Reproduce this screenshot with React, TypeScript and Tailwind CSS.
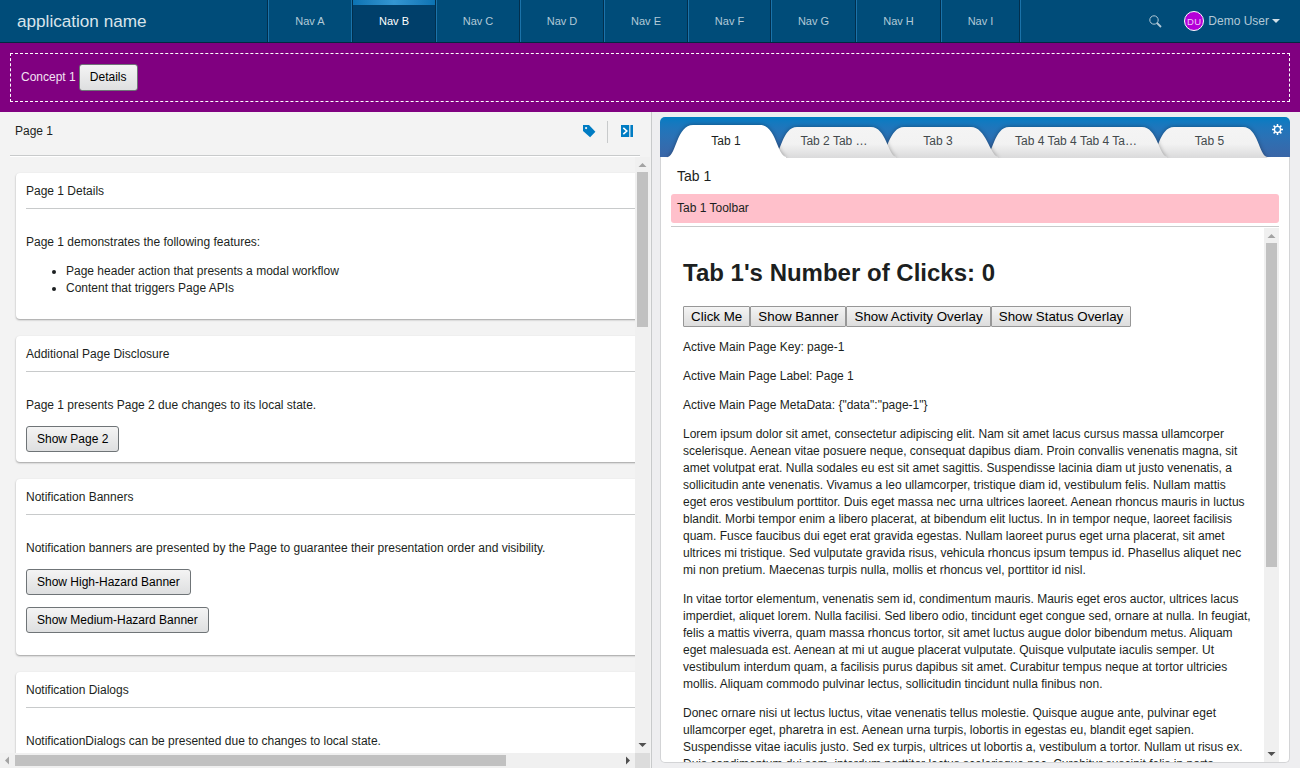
import type { ReactNode } from "react";

const navItems = [
  { label: "Nav A", width: "w-[84px]" },
  { label: "Nav B", width: "w-[84px]" },
  { label: "Nav C", width: "w-[84px]" },
  { label: "Nav D", width: "w-[84px]" },
  { label: "Nav E", width: "w-[84px]" },
  { label: "Nav F", width: "w-[83px]" },
  { label: "Nav G", width: "w-[85px]" },
  { label: "Nav H", width: "w-[85px]" },
  { label: "Nav I", width: "w-[79px]" },
];

const paragraphs = [
  "Active Main Page Key: page-1",
  "Active Main Page Label: Page 1",
  'Active Main Page MetaData: {"data":"page-1"}',
  "Lorem ipsum dolor sit amet, consectetur adipiscing elit. Nam sit amet lacus cursus massa ullamcorper scelerisque. Aenean vitae posuere neque, consequat dapibus diam. Proin convallis venenatis magna, sit amet volutpat erat. Nulla sodales eu est sit amet sagittis. Suspendisse lacinia diam ut justo venenatis, a sollicitudin ante venenatis. Vivamus a leo ullamcorper, tristique diam id, vestibulum felis. Nullam mattis eget eros vestibulum porttitor. Duis eget massa nec urna ultrices laoreet. Aenean rhoncus mauris in luctus blandit. Morbi tempor enim a libero placerat, at bibendum elit luctus. In in tempor neque, laoreet facilisis quam. Fusce faucibus dui eget erat gravida egestas. Nullam laoreet purus eget urna placerat, sit amet ultrices mi tristique. Sed vulputate gravida risus, vehicula rhoncus ipsum tempus id. Phasellus aliquet nec mi non pretium. Maecenas turpis nulla, mollis et rhoncus vel, porttitor id nisl.",
  "In vitae tortor elementum, venenatis sem id, condimentum mauris. Mauris eget eros auctor, ultrices lacus imperdiet, aliquet lorem. Nulla facilisi. Sed libero odio, tincidunt eget congue sed, ornare at nulla. In feugiat, felis a mattis viverra, quam massa rhoncus tortor, sit amet luctus augue dolor bibendum metus. Aliquam eget malesuada est. Aenean at mi ut augue placerat vulputate. Quisque vulputate iaculis semper. Ut vestibulum interdum quam, a facilisis purus dapibus sit amet. Curabitur tempus neque at tortor ultricies mollis. Aliquam commodo pulvinar lectus, sollicitudin tincidunt nulla finibus non.",
  "Donec ornare nisi ut lectus luctus, vitae venenatis tellus molestie. Quisque augue ante, pulvinar eget ullamcorper eget, pharetra in est. Aenean urna turpis, lobortis in egestas eu, blandit eget sapien. Suspendisse vitae iaculis justo. Sed ex turpis, ultrices ut lobortis a, vestibulum a tortor. Nullam ut risus ex. Duis condimentum dui sem, interdum porttitor lectus scelerisque nec. Curabitur suscipit felis in porta.",
];

function Button({ children }: { children: ReactNode }) {
  return (
    <button className="block h-[26px] rounded-[3px] border border-[#6f7477] bg-gradient-to-b from-[#f4f4f4] to-[#dedfe0] px-[10px] text-[12px] leading-[24px] text-black">
      {children}
    </button>
  );
}

function Card({ title, children, className }: { title: string; children: ReactNode; className: string }) {
  return (
    <section className={`w-[760px] shrink-0 rounded-[4px] bg-white px-[10px] shadow-[0_1px_2px_rgba(0,0,0,0.35)] ${className}`}>
      <h2 className="h-[36px] border-b border-[#c8cacb] pt-[10px] leading-[17px]">{title}</h2>
      <div className="pt-[25px]">{children}</div>
    </section>
  );
}

function Arrow({ dir, dim }: { dir: "up" | "down" | "left" | "right"; dim?: boolean }) {
  const points = { up: "3.5,10 7.5,6 11.5,10", down: "3.5,5 7.5,9 11.5,5", left: "9,3.5 5,7.5 9,11.5", right: "6,3.5 10,7.5 6,11.5" }[dir];
  return (
    <svg width="15" height="15" viewBox="0 0 15 15" className="block shrink-0">
      <polygon points={points} fill={dim ? "#a3a3a3" : "#505050"} />
    </svg>
  );
}

function TabShapes() {
  const tab = (l: number, a: number, b: number, r: number) =>
    `M${l} 41 L${l} 40 C${l + 8} 38 ${a - 15} 10 ${a} 10 H${b} C${b + 15} 10 ${r - 8} 38 ${r} 40 L${r} 41 Z`;
  return (
    <svg width="630" height="41" viewBox="0 0 630 41" className="absolute left-0 top-0">
      <defs>
        <linearGradient id="tab" x1="0" y1="0" x2="0" y2="1">
          <stop offset="0" stopColor="#f4f4f4" />
          <stop offset=".55" stopColor="#f2f2f2" />
          <stop offset="1" stopColor="#dadadb" />
        </linearGradient>
        <filter id="shade" x="-10%" y="-25%" width="120%" height="150%" colorInterpolationFilters="sRGB">
          <feDropShadow dx="0" dy="0" stdDeviation="2" floodColor="#000" floodOpacity=".35" />
        </filter>
      </defs>
      <path filter="url(#shade)" fill="url(#tab)" d={tab(490, 514, 583, 607)} />
      <path filter="url(#shade)" fill="url(#tab)" d={tab(325, 349, 482, 507)} />
      <path filter="url(#shade)" fill="url(#tab)" d={tab(219, 244, 311, 338)} />
      <path filter="url(#shade)" fill="url(#tab)" d={tab(113, 137, 211, 236)} />
      <path filter="url(#shade)" fill="#fff" d="M8 41V40C16 38 17 8 33 8H100C116 8 117 38 126 40V41Z" />
    </svg>
  );
}

export default function App() {
  return (
    <div className="flex h-[768px] w-[1300px] flex-col overflow-hidden bg-[#f3f3f3] font-['Liberation_Sans',Arial,sans-serif] text-[12px] leading-[17px] text-[#1c1f21]">
      <header className="flex h-[43px] shrink-0 border-b border-[#022841] bg-[#004c79]">
        <div className="w-[267px] pl-[17px] text-[17.14px] leading-[42px] text-[#d9e4eb]">application name</div>
        <nav className="flex border-l border-[#022f4d] text-center text-[11px] leading-[42px]">
          {navItems.map(({ label, width }) =>
            label === "Nav B" ? (
              <div key={label} className={`relative border-x border-[#022f4d] bg-[#003f6a] text-white ${width}`}>
                <span className="absolute inset-x-0 top-0 h-[5px] bg-gradient-to-r from-[#0b73b3] via-[#3496d2] to-[#0b73b3]" />
                {label}
              </div>
            ) : (
              <div
                key={label}
                className={`border-x border-l-[#1b73aa] text-[#b2c9d7] ${label === "Nav A" ? "border-r-[#1b73aa]" : "border-r-[#022f4d]"} ${width}`}
              >
                {label}
              </div>
            ),
          )}
          <div className="w-px bg-[#1b73aa]" />
        </nav>
        <div className="ml-auto flex items-center pr-[20px] text-[#b2c9d7]">
          <svg width="13" height="13" viewBox="0 0 13 13" className="mr-[22px]" fill="none" stroke="#b2c9d7">
            <circle cx="5" cy="5" r="4.2" strokeWidth="1" />
            <path d="M8 8 L12 12" strokeWidth="1.8" />
          </svg>
          <span className="mr-[4px] flex size-[20px] items-center justify-center rounded-full border border-white bg-[#b400d8] text-[9.5px] tracking-[0.4px] text-[#f0ccf6]">DU</span>
          <span>Demo User</span>
          <svg width="8" height="4" viewBox="0 0 8 4" className="ml-[3px]"><path d="M0 0H8L4 4Z" fill="#d2e0e8" /></svg>
        </div>
      </header>

      <div className="h-[69px] shrink-0 bg-[#800080] p-[10px]">
        <div className="flex h-[49px] items-start gap-[3px] border border-dashed border-white px-[10px] pt-[10px] text-[#f3e2f3]">
          <span className="pt-[5px]">Concept 1</span>
          <button className="h-[27px] w-[59px] rounded-[3px] border border-[#6f7477] bg-gradient-to-b from-[#f4f4f4] to-[#dedfe0] text-[12px] text-black">Details</button>
        </div>
      </div>

      <main className="flex min-h-0 flex-1">
        <div className="flex w-[651px] shrink-0 flex-col">
          <div className="ml-[10px] mr-[11px] flex h-[44px] shrink-0 items-start border-b border-[#c8cacb] pl-[5px] pt-[9px] shadow-[0_1px_0_#fff]">
            <h1 className="flex-1 pt-[2px]">Page 1</h1>
            <svg width="13" height="13" viewBox="0 0 13 13" className="mr-[11px] mt-[4px]">
              <path fill="#007cc3" fillRule="evenodd" d="M0 0H6L12.4 6.8 7.1 12.2 0 6.1ZM3.1 2A1.1 1.1 0 1 0 3.1 4.2 1.1 1.1 0 0 0 3.1 2Z" />
            </svg>
            <span className="mr-[13px] h-[22px] w-px bg-[#c8cacb]" />
            <svg width="12" height="12" viewBox="0 0 12 12" className="mr-[7px] mt-[4px]">
              <path fill="#007cc3" d="M0 0H8.2V12H0ZM9.4 0H12V12H9.4Z" />
              <path d="M2.3 2.8L5.8 6 2.3 9.2" fill="none" stroke="#fff" strokeWidth="1.6" />
            </svg>
          </div>
          <div className="mt-px flex min-h-0 flex-1">
            <div className="flex min-w-0 flex-1 flex-col">
              <div className="flex min-h-0 flex-1 flex-col gap-[17px] overflow-hidden pl-[16px] pt-[16px]">
                <Card title="Page 1 Details" className="h-[146px]">
                  <p>Page 1 demonstrates the following features:</p>
                  <ul className="mt-[12px] list-disc pl-[40px]">
                    <li>Page header action that presents a modal workflow</li>
                    <li>Content that triggers Page APIs</li>
                  </ul>
                </Card>
                <Card title="Additional Page Disclosure" className="h-[126px]">
                  <p className="mb-[12px]">Page 1 presents Page 2 due changes to its local state.</p>
                  <Button>Show Page 2</Button>
                </Card>
                <Card title="Notification Banners" className="h-[176px]">
                  <p className="mb-[12px]">Notification banners are presented by the Page to guarantee their presentation order and visibility.</p>
                  <div className="flex flex-col items-start gap-[12px]">
                    <Button>Show High-Hazard Banner</Button>
                    <Button>Show Medium-Hazard Banner</Button>
                  </div>
                </Card>
                <Card title="Notification Dialogs" className="h-[140px]">
                  <p>NotificationDialogs can be presented due to changes to local state.</p>
                </Card>
              </div>
              <div className="flex h-[15px] shrink-0 items-center bg-[#f0f0f0]">
                <Arrow dir="left" dim />
                <div className="h-[11px] w-[491px] bg-[#c1c1c1]" />
                <div className="flex-1" />
                <Arrow dir="right" />
              </div>
            </div>
            <div className="flex w-[15px] shrink-0 flex-col items-center bg-[#f0f0f0]">
              <Arrow dir="up" dim />
              <div className="h-[155px] w-[11px] bg-[#c1c1c1]" />
              <div className="flex-1" />
              <Arrow dir="down" />
              <div className="h-[15px] w-full shrink-0 bg-[#dcdcdc]" />
            </div>
            <div className="w-px" />
          </div>
        </div>

        <div className="flex min-w-0 flex-1 flex-col border-l border-[#c8cacb] bg-[#eeeef0] pb-[5px] pl-[8px] pr-[10px] pt-[5px]">
          <div className="relative h-[40px] shrink-0 rounded-t-[5px] bg-gradient-to-b from-[#007cc3] to-[#3a66a7]">
            <TabShapes />
            <div className="relative flex h-full pt-[16px] text-center text-[#434a4d]">
              <span className="ml-[12px] w-[108px] text-[#1c1f21]">Tab 1</span>
              <span className="w-[108px]">Tab 2 Tab …</span>
              <span className="w-[100px]">Tab 3</span>
              <span className="w-[176px]">Tab 4 Tab 4 Tab 4 Ta…</span>
              <span className="w-[91px]">Tab 5</span>
              <svg width="11" height="11" viewBox="0 0 11 11" className="ml-[17px] -mt-[9px]" stroke="#fff" fill="none">
                <circle cx="5.5" cy="5.5" r="3.1" strokeWidth="1.4" />
                <path strokeWidth="1.5" d="M5.5 0V2M5.5 9V11M0 5.5H2M9 5.5H11M1.6 1.6L3 3M8 8L9.4 9.4M9.4 1.6L8 3M3 8L1.6 9.4" />
              </svg>
            </div>
          </div>
          <div className="flex min-h-0 flex-1 flex-col rounded-b-[5px] border border-t-0 border-[#d3d4d6] bg-white px-[10px]">
            <h2 className="h-[37px] shrink-0 pl-[6px] pt-[10px] text-[14px] leading-[18px]">Tab 1</h2>
            <div className="h-[29px] shrink-0 rounded-[3px] bg-[#ffc0cb] pl-[6px] pt-[6px]">Tab 1 Toolbar</div>
            <div className="mt-[3px] h-px shrink-0 bg-[#c8cacb]" />
            <div className="mt-px flex min-h-0 flex-1">
              <div className="min-w-0 flex-1 overflow-hidden px-[12px]">
                <h1 className="pt-[28px] text-[24px] font-bold leading-[34px]">Tab 1's Number of Clicks: 0</h1>
                <div className="mb-[12px] mt-[16px] flex">
                  {["Click Me", "Show Banner", "Show Activity Overlay", "Show Status Overlay"].map((b) => (
                    <button key={b} className="h-[21px] whitespace-nowrap rounded-[1px] border border-[#979797] bg-gradient-to-b from-[#f4f4f4] to-[#dddddd] px-[7.08px] text-[13.333px] leading-[19px] text-black">{b}</button>
                  ))}
                </div>
                {paragraphs.map((p) => (
                  <p key={p} className="mb-[12px]">{p}</p>
                ))}
              </div>
              <div className="flex w-[15px] shrink-0 flex-col items-center bg-[#f0f0f0]">
                <Arrow dir="up" dim />
                <div className="h-[324px] w-[11px] bg-[#c1c1c1]" />
                <div className="flex-1" />
                <Arrow dir="down" />
              </div>
            </div>
          </div>
        </div>
      </main>
    </div>
  );
}
